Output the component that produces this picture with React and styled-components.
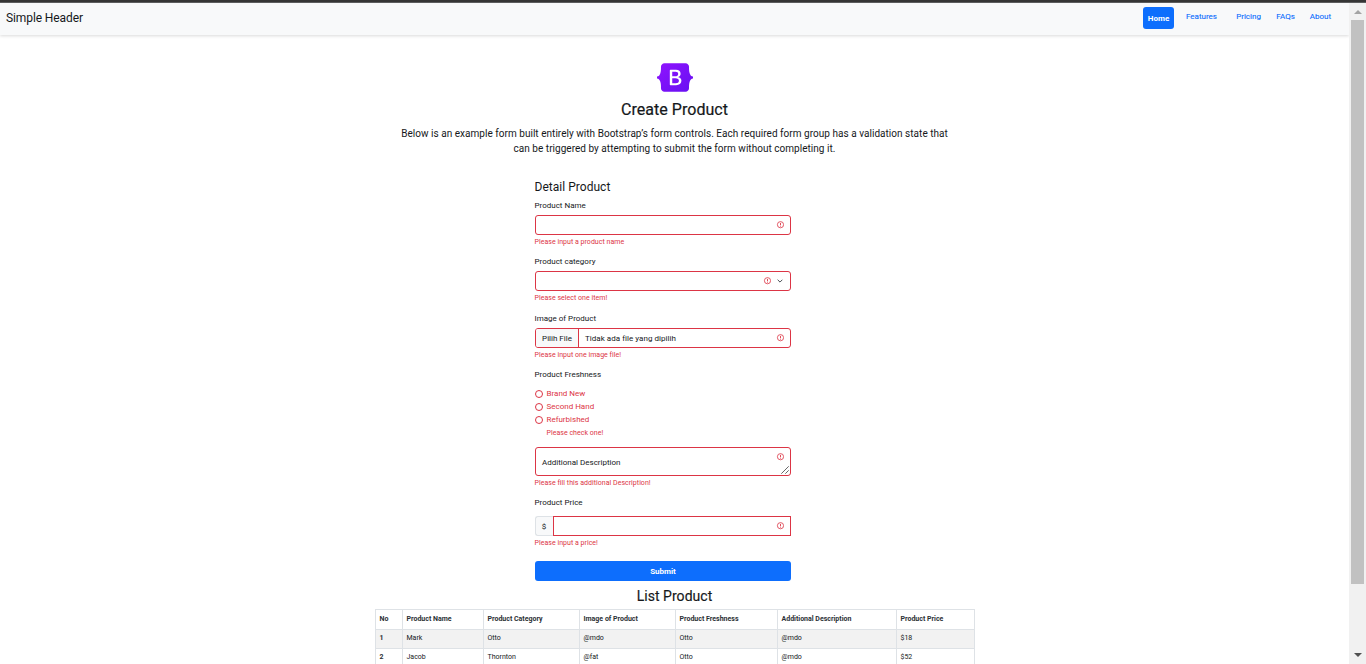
import React from "react";
import styled, { createGlobalStyle, css } from "styled-components";

const GlobalStyle = createGlobalStyle`
  * { box-sizing: border-box; }
  html, body { margin: 0; padding: 0; background: #fff; overflow: hidden; }
  body { font-family: Roboto, "Liberation Sans", sans-serif; font-size: 8px; line-height: 12px; color: #15181b; }
  h1, h2, p { margin: 0; font-weight: 400; }
  input, select, textarea, button { font: inherit; color: inherit; outline: none; margin: 0; }
`;

const red = "#dc3545";

const Window = styled.div`
  height: 664px;
  display: flex;
  flex-direction: column;
  overflow: hidden;
`;
const TopEdge = styled.div`
  flex: none;
  height: 3px;
  background: #353535;
  border-bottom: 1px solid #5c5d5e;
`;
const Viewport = styled.div`
  flex: 1;
  min-height: 0;
  display: flex;
`;
const Page = styled.div`
  flex: 1;
  min-width: 0;
  overflow: hidden;
`;

const Header = styled.header`
  height: 32px;
  padding: 4px 11px 6px 6px;
  display: flex;
  justify-content: space-between;
  align-items: flex-start;
  background: #f8f9fa;
  box-shadow: 0 1px 3px rgba(0, 0, 0, 0.15);
`;
const Brand = styled.a`
  font-size: 12px;
  line-height: 22px;
  letter-spacing: -0.1px;
`;
const Nav = styled.nav`
  display: flex;
`;
const NavLink = styled.a`
  width: ${(p) => p.$width}px;
  height: ${(p) => (p.$active ? 22 : 19)}px;
  line-height: ${(p) => (p.$active ? 23 : 19)}px;
  text-align: center;
  border-radius: 3px;
  color: #0d6efd;
  ${(p) =>
    p.$active
      ? css`
          background: #0d6efd;
          color: #fff;
          font-weight: 700;
        `
      : css`
          -webkit-text-stroke: 0.1px #0d6efd;
        `}
`;

const Intro = styled.section`
  padding-top: 28px;
  display: flex;
  flex-direction: column;
  align-items: center;
  text-align: center;
`;
const Title = styled.h1`
  margin-top: 8px;
  font-size: 16px;
  line-height: 19px;
  letter-spacing: 0.04px;
  -webkit-text-stroke: 0.2px currentColor;
`;
const Lead = styled.p`
  width: 600px;
  margin-top: 7px;
  font-size: 10px;
  line-height: 15px;
  letter-spacing: 0.033px;
`;

const Form = styled.form`
  width: 256px;
  margin: 24px 0 0 535px;
`;
const FormTitle = styled.h2`
  margin-left: -0.5px;
  font-size: 12px;
  line-height: 15px;
  letter-spacing: 0.03px;
`;
const Label = styled.label`
  display: block;
  margin: ${(p) => p.$top}px 0 ${(p) => p.$bottom ?? 3}px -0.5px;
`;
const Feedback = styled.div`
  margin: 2px 0 0 ${(p) => p.$indent ?? -0.5}px;
  height: 11px;
  font-size: 7px;
  line-height: 11px;
  letter-spacing: 0.03px;
  color: ${red};
`;
const Control = styled.div`
  height: ${(p) => p.$height || 20}px;
  display: flex;
  align-items: center;
  gap: 6px;
  padding-right: ${(p) => p.$end || 6}px;
  border: 1px solid ${red};
  border-radius: 3px;
  background: #fff;
`;
const Field = styled.input`
  flex: 1;
  min-width: 0;
  height: 100%;
  border: 0;
  padding: 0 6px;
  background: transparent;
`;
const FileButton = styled.span`
  width: 43px;
  align-self: stretch;
  line-height: 19px;
  text-align: center;
  background: #f8f9fa;
  border-right: 1px solid ${red};
  border-radius: 2px 0 0 2px;
`;
const FileName = styled.span`
  flex: 1;
  line-height: 19px;
  letter-spacing: 0.04px;
`;
const Radios = styled.div`
  margin-top: 6px;
`;
const RadioRow = styled.label`
  height: 13px;
  line-height: 13px;
  display: flex;
  align-items: center;
  gap: 3.5px;
  color: ${red};
`;
const Radio = styled.input`
  appearance: none;
  width: 8px;
  height: 8px;
  border: 1px solid ${red};
  border-radius: 50%;
`;
const Description = styled(Control)`
  margin-top: 8px;
  align-items: stretch;
  padding: 0;
`;
const DescriptionText = styled.span`
  flex: 1;
  padding: 9px 6px 0;
`;
const DescriptionMarks = styled.span`
  width: 14px;
  padding: 5px 1px 1px 0;
  display: flex;
  flex-direction: column;
  justify-content: space-between;
  align-items: flex-start;
  svg:last-child { align-self: flex-end; }
`;
const PriceGroup = styled.div`
  display: flex;
`;
const Currency = styled.span`
  width: 18px;
  height: 20px;
  line-height: 19px;
  padding-right: 1px;
  text-align: center;
  background: #f8f9fa;
  border: 1px solid #dee2e6;
  border-right: 0;
  border-radius: 3px 0 0 3px;
`;
const PriceControl = styled(Control)`
  flex: 1;
  border-radius: 0;
`;
const Submit = styled.button`
  display: block;
  width: 256px;
  height: 20px;
  margin-top: 12px;
  padding: 1px 0 0;
  border: 0;
  border-radius: 3px;
  background: #0d6efd;
  color: #fff;
  font-size: 8px;
  font-weight: 700;
`;

const ListTitle = styled.h2`
  margin-top: 6px;
  font-size: 14px;
  line-height: 18px;
  text-align: center;
  letter-spacing: 0.04px;
  -webkit-text-stroke: 0.15px currentColor;
`;
const Table = styled.table`
  width: 600px;
  margin: 4px 0 0 375px;
  border-collapse: collapse;
  table-layout: fixed;
  font-size: 7px;
  line-height: 10px;
  th, td {
    height: 19px;
    padding: 0 3.5px 2px;
    border: 1px solid #dee2e6;
    text-align: left;
    white-space: nowrap;
  }
  th { color: #2b3035; }
  thead th { height: 20px; padding-bottom: 1px; }
  tbody tr:nth-child(odd) { background: #f2f2f2; }
`;

const Scrollbar = styled.div`
  flex: none;
  width: 17px;
  padding: 7px 2px 7px;
  display: flex;
  flex-direction: column;
  align-items: center;
  background: #f1f1f1;
`;
const Thumb = styled.div`
  width: 13px;
  height: 564px;
  margin: 6px 0 auto;
  background: #c1c1c1;
`;

const Logo = () => (
  <svg width="36" height="29" viewBox="0 0 118 94" aria-label="Bootstrap">
    <defs>
      <linearGradient id="violet" x1="0" y1="0" x2="1" y2="1">
        <stop stopColor="#9013fe" />
        <stop offset="1" stopColor="#6610f2" />
      </linearGradient>
    </defs>
    <path
      fill="url(#violet)"
      d="M24.509 0c-6.733 0-11.715 5.893-11.492 12.284.214 6.14-.064 14.092-2.066 20.577C8.943 39.365 5.547 43.485 0 44.014v5.972c5.547.529 8.943 4.649 10.951 11.153 2.002 6.485 2.28 14.437 2.066 20.577C12.794 88.106 17.776 94 24.51 94H93.5c6.733 0 11.714-5.893 11.491-12.284-.214-6.14.064-14.092 2.066-20.577 2.009-6.504 5.396-10.624 10.943-11.153v-5.972c-5.547-.529-8.934-4.649-10.943-11.153-2.002-6.484-2.28-14.437-2.066-20.577C105.214 5.894 100.233 0 93.5 0H24.508z"
    />
    <path
      fill="#fff"
      fillRule="evenodd"
      d="M80 57.863C80 66.663 73.436 72 62.543 72H44a2 2 0 01-2-2V24a2 2 0 012-2h18.437c9.083 0 15.044 4.92 15.044 12.474 0 5.302-4.01 10.049-9.119 10.88v.277C75.317 46.394 80 51.21 80 57.863zM60.521 28.34H49.948v14.934h8.905c6.884 0 10.68-2.772 10.68-7.727 0-4.643-3.264-7.207-9.012-7.207zM49.948 49.2v16.458H60.91c7.167 0 10.964-2.876 10.964-8.281 0-5.406-3.903-8.178-11.425-8.178H49.948z"
    />
  </svg>
);
const Alert = () => (
  <svg width="8" height="8" viewBox="0 0 8 8" fill="none" stroke={red}>
    <circle cx="4.5" cy="3.7" r="3.1" strokeWidth="0.8" />
    <path strokeWidth="0.9" d="M4.5 1.9v2.3M4.5 4.8v0.8" />
  </svg>
);
const Chevron = () => (
  <svg width="6" height="8" viewBox="0 0 6 8" fill="none" stroke="#4a5056" strokeWidth="1">
    <path strokeLinecap="round" strokeLinejoin="round" d="m0.9 3 2.1 2.1L5.1 3" />
  </svg>
);
const Grip = () => (
  <svg width="8" height="8" viewBox="0 0 8 8" stroke="#555" strokeWidth="0.9">
    <path d="M.3 7.7L7.7.3M4.3 7.7L7.7 4.3" />
  </svg>
);
const Arrow = ({ down }) => (
  <svg width="8" height="4" viewBox="0 0 8 4" fill={down ? "#505050" : "#a3a3a3"}>
    <path d={down ? "M0 0h8L4 4z" : "M0 4h8L4 0z"} />
  </svg>
);

const links = [
  { label: "Home", width: 31, active: true },
  { label: "Features", width: 55 },
  { label: "Pricing", width: 39 },
  { label: "FAQs", width: 35 },
  { label: "About", width: 35 },
];
const columns = [
  ["No", 27],
  ["Product Name", 81],
  ["Product Category", 96],
  ["Image of Product", 96],
  ["Product Freshness", 102],
  ["Additional Description", 119],
  ["Product Price", 78],
];
const rows = [
  ["1", "Mark", "Otto", "@mdo", "Otto", "@mdo", "$18"],
  ["2", "Jacob", "Thornton", "@fat", "Otto", "@mdo", "$52"],
];

export default function App() {
  return (
    <Window>
      <GlobalStyle />
      <TopEdge />
      <Viewport>
        <Page>
          <Header>
            <Brand>Simple Header</Brand>
            <Nav>
              {links.map((l) => (
                <NavLink key={l.label} $width={l.width} $active={l.active}>
                  {l.label}
                </NavLink>
              ))}
            </Nav>
          </Header>

          <Intro>
            <Logo />
            <Title>Create Product</Title>
            <Lead>
              Below is an example form built entirely with Bootstrap’s form controls. Each required form group has a validation state that
              <br />
              can be triggered by attempting to submit the form without completing it.
            </Lead>
          </Intro>

          <Form>
            <FormTitle>Detail Product</FormTitle>

            <Label $top={5}>Product Name</Label>
            <Control>
              <Field />
              <Alert />
            </Control>
            <Feedback>Please input a product name</Feedback>

            <Label $top={8}>Product category</Label>
            <Control $end={7}>
              <Field />
              <Alert />
              <Chevron />
            </Control>
            <Feedback>Please select one item!</Feedback>

            <Label $top={9}>Image of Product</Label>
            <Control>
              <FileButton>Pilih File</FileButton>
              <FileName>Tidak ada file yang dipilih</FileName>
              <Alert />
            </Control>
            <Feedback>Please input one image file!</Feedback>

            <Label $top={8} $bottom={0}>Product Freshness</Label>
            <Radios>
              {["Brand New", "Second Hand", "Refurbished"].map((name) => (
                <RadioRow key={name}>
                  <Radio type="radio" name="freshness" />
                  {name}
                </RadioRow>
              ))}
            </Radios>
            <Feedback $indent={11.5}>Please check one!</Feedback>

            <Description $height={29}>
              <DescriptionText>Additional Description</DescriptionText>
              <DescriptionMarks>
                <Alert />
                <Grip />
              </DescriptionMarks>
            </Description>
            <Feedback>Please fill this additional Description!</Feedback>

            <Label $top={8} $bottom={7}>Product Price</Label>
            <PriceGroup>
              <Currency>$</Currency>
              <PriceControl>
                <Field />
                <Alert />
              </PriceControl>
            </PriceGroup>
            <Feedback>Please input a price!</Feedback>

            <Submit type="button">Submit</Submit>
          </Form>

          <ListTitle>List Product</ListTitle>
          <Table>
            <colgroup>
              {columns.map(([name, width]) => (
                <col key={name} width={width} />
              ))}
            </colgroup>
            <thead>
              <tr>
                {columns.map(([name]) => (
                  <th key={name}>{name}</th>
                ))}
              </tr>
            </thead>
            <tbody>
              {rows.map(([no, ...cells]) => (
                <tr key={no}>
                  <th>{no}</th>
                  {cells.map((cell, i) => (
                    <td key={i}>{cell}</td>
                  ))}
                </tr>
              ))}
            </tbody>
          </Table>
        </Page>
        <Scrollbar>
          <Arrow />
          <Thumb />
          <Arrow down />
        </Scrollbar>
      </Viewport>
    </Window>
  );
}
